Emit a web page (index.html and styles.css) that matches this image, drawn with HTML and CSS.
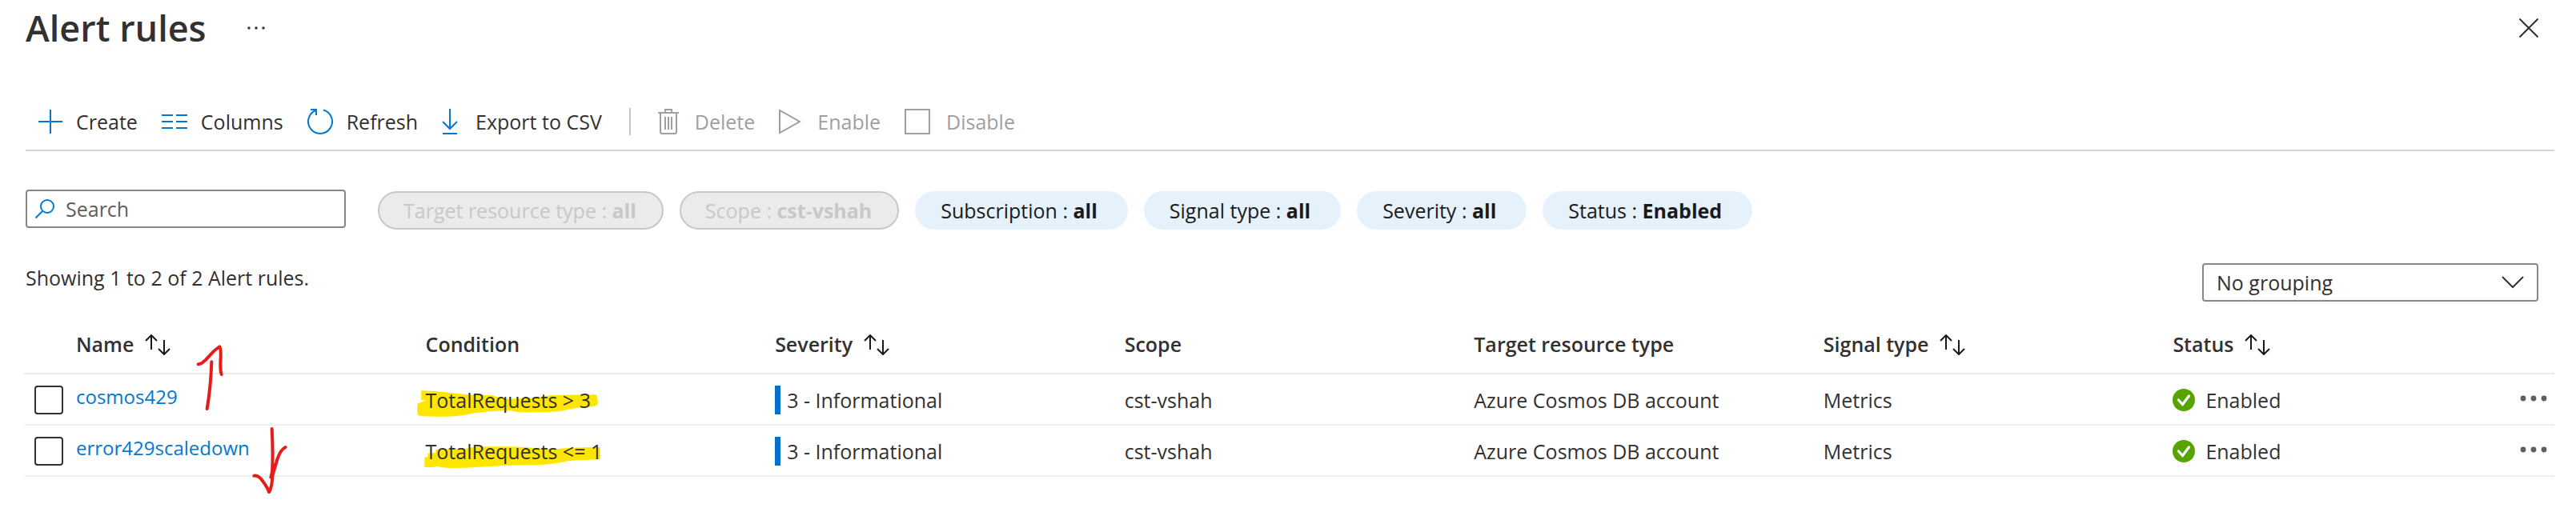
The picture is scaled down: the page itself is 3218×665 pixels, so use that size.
FILE: index.html
```html
<!DOCTYPE html>
<html lang="en">
<head>
<meta charset="utf-8">
<title>Alert rules</title>
<link rel="stylesheet" href="styles.css">
</head>
<body>
<svg class="defs" aria-hidden="true">
  <symbol id="sort" viewBox="0 0 32 26">
    <path d="M8 19V1M1 8l7-7 7 7M24 7v18M17 18l7 7 7-7"/>
  </symbol>
  <symbol id="check" viewBox="0 0 28 28">
    <circle cx="14" cy="14" r="14" fill="#57a300"/>
    <path d="M7.500 14l5 5.500 8-10.500" fill="none" stroke="#fff" stroke-width="3.200" stroke-linecap="round"/>
  </symbol>
  <symbol id="more" viewBox="0 0 34 8">
    <circle cx="4" cy="4" r="3.400"/><circle cx="17" cy="4" r="3.400"/><circle cx="30" cy="4" r="3.400"/>
  </symbol>
</svg>

<header class="titlebar">
  <h1 class="title">Alert rules</h1>
  <button class="icon-button title-more" aria-label="More options">
    <svg width="24" height="6" viewBox="0 0 24 6" fill="#323130"><circle cx="3" cy="3" r="1.700"/><circle cx="12" cy="3" r="1.700"/><circle cx="21" cy="3" r="1.700"/></svg>
  </button>
  <button class="icon-button close" aria-label="Close">
    <svg width="24" height="24" viewBox="0 0 24 24" class="stroke dark"><path d="M.5.5l23 23M23.5.5l-23 23"/></svg>
  </button>
</header>

<nav class="toolbar" aria-label="Commands">
  <button class="command">
    <svg width="30" height="32" viewBox="0 0 30 32" class="stroke blue"><path d="M15 1v30M0 16h30"/></svg>Create</button>
  <button class="command">
    <svg width="32" height="32" viewBox="0 0 32 32" class="stroke blue"><path d="M0 8h14M18 8h14M0 16h14M18 16h14M0 24h14M18 24h14"/></svg>Columns</button>
  <button class="command">
    <svg width="32" height="32" viewBox="0 0 32 32" class="stroke blue"><path d="M20 1.500a15 15 0 1 1-9.500 0.500M4 1h7v7"/></svg>Refresh</button>
  <button class="command export">
    <svg width="20" height="32" viewBox="0 0 20 32" class="stroke blue"><path d="M10 0v25M1 16l9 9 9-9M1 31h18"/></svg>Export to CSV</button>
  <span class="divider"></span>
  <button class="command" disabled>
    <svg width="26" height="32" viewBox="0 0 26 32" class="stroke"><path d="M0 5h26M9 5V1h8v4M3 5v24q0 2 2 2h16q2 0 2-2V5M9 10v16M13 10v16M17 10v16"/></svg>Delete</button>
  <button class="command" disabled>
    <svg width="28" height="32" viewBox="0 0 28 32" class="stroke"><path d="M1 2v28l25-14z"/></svg>Enable</button>
  <button class="command" disabled>
    <svg width="32" height="32" viewBox="0 0 32 32" class="stroke"><path d="M1 1h30v30H1z"/></svg>Disable</button>
</nav>

<section class="filters" aria-label="Filters">
  <label class="search">
    <svg width="24" height="24" viewBox="0 0 24 24" class="stroke blue"><circle cx="15" cy="9" r="8"/><path d="M9 15l-8.500 8.500"/></svg>
    <input type="search" placeholder="Search" aria-label="Search">
  </label>
  <div class="pills">
    <button class="pill" disabled>Target resource type : <b>all</b></button>
    <button class="pill" disabled>Scope : <b>cst-vshah</b></button>
    <button class="pill">Subscription : <b>all</b></button>
    <button class="pill">Signal type : <b>all</b></button>
    <button class="pill">Severity : <b>all</b></button>
    <button class="pill">Status : <b>Enabled</b></button>
  </div>
</section>

<section class="summary">
  <p class="count">Showing 1 to 2 of 2 Alert rules.</p>
  <div class="grouping">
    <select aria-label="Grouping"><option>No grouping</option></select>
    <svg width="28" height="16" viewBox="0 0 28 16" class="stroke dark chevron"><path d="M1 1l13 13L27 1"/></svg>
  </div>
</section>

<main class="rules">
  <table>
    <colgroup><col class="col-check"><col><col><col><col><col><col><col><col class="col-more"></colgroup>
    <thead>
      <tr>
        <td></td>
        <th scope="col">Name<svg class="sort"><use href="#sort"/></svg></th>
        <th scope="col">Condition</th>
        <th scope="col">Severity<svg class="sort"><use href="#sort"/></svg></th>
        <th scope="col">Scope</th>
        <th scope="col">Target resource type</th>
        <th scope="col">Signal type<svg class="sort"><use href="#sort"/></svg></th>
        <th scope="col">Status<svg class="sort"><use href="#sort"/></svg></th>
        <td></td>
      </tr>
    </thead>
    <tbody>
      <tr>
        <td><input class="tick" type="checkbox" aria-label="Select cosmos429"></td>
        <td class="name"><a href="#">cosmos429</a></td>
        <td><span class="marked"><svg class="marker" viewBox="0 0 750 180"><path d="M45 55L100 57L220 70L310 72Q360 90 400 85Q480 85 530 72L700 70Q708 75 707 108Q690 118 640 118Q600 125 560 133Q480 138 410 136L380 130Q300 130 230 142Q190 153 120 152Q50 153 33 147Q29 130 31 104L65 91L46 91z"/></svg>TotalRequests &gt; 3</span></td>
        <td><span class="severity">3 - Informational</span></td>
        <td>cst-vshah</td>
        <td>Azure Cosmos DB account</td>
        <td>Metrics</td>
        <td><span class="status"><svg width="28" height="28"><use href="#check"/></svg>Enabled</span></td>
        <td><button class="icon-button row-more" aria-label="More actions for cosmos429"><svg width="34" height="8"><use href="#more"/></svg></button></td>
      </tr>
      <tr>
        <td><input class="tick" type="checkbox" aria-label="Select error429scaledown"></td>
        <td class="name"><a href="#">error429scaledown</a></td>
        <td><span class="marked"><svg class="marker" viewBox="0 192 750 180"><path d="M100 275L215 272Q240 265 290 265L390 265Q480 270 540 276Q580 267 716 267L716 312L600 318Q540 332 470 334Q350 335 250 342Q160 347 120 343Q105 335 92 342L58 342L58 305L70 303L70 290L100 288z"/></svg>TotalRequests &lt;= 1</span></td>
        <td><span class="severity">3 - Informational</span></td>
        <td>cst-vshah</td>
        <td>Azure Cosmos DB account</td>
        <td>Metrics</td>
        <td><span class="status"><svg width="28" height="28"><use href="#check"/></svg>Enabled</span></td>
        <td><button class="icon-button row-more" aria-label="More actions for error429scaledown"><svg width="34" height="8"><use href="#more"/></svg></button></td>
      </tr>
    </tbody>
  </table>
  <svg class="ink" viewBox="0 0 420 660" aria-hidden="true">
    <path d="M53 136Q65 135 82 118L110 88Q125 75 133 70Q138 75 137 110Q134 155 140 174M103 127Q100 220 86 303"/>
    <path d="M329 378Q334 480 330 540L325 560M262 554Q280 552 295 575Q312 598 318 615Q328 605 332 550Q338 530 350 490Q362 455 380 447"/>
  </svg>
</main>
</body>
</html>
```
FILE: styles.css
```css
* { box-sizing: border-box; }
body {
  min-height: 100vh;
  margin: 0;
  padding: 0 27px 0 32px;
  background: #fff;
  color: #323130;
  font: 25px/36px "Open Sans", "Noto Sans", sans-serif;
}
button, input, select { font: inherit; color: inherit; }
.defs { position: absolute; width: 0; height: 0; }
.stroke { fill: none; stroke: currentColor; stroke-width: 2; flex: none; }
.blue { color: #0078d4; }
.dark { color: #323130; }
.icon-button { display: flex; padding: 0; border: 0; background: none; }

.titlebar { display: flex; align-items: center; height: 70px; }
.title { margin: 0; font-size: 45px; line-height: 68px; font-weight: 600; }
.title-more { margin-left: 50px; }
.close { margin: 0 20px 0 auto; }

.toolbar {
  display: flex;
  align-items: center;
  gap: 30px;
  height: 119px;
  padding: 46px 0 0 16px;
  border-bottom: 2px solid #d6d6d6;
}
.command { display: flex; align-items: center; gap: 17px; padding: 0; border: 0; background: none; }
.command:disabled { gap: 20px; color: #a19f9d; }
.export { gap: 22px; }
.divider { width: 2px; height: 34px; margin: 0 4px; background: #c8c6c4; }

.filters { display: flex; align-items: flex-start; gap: 40px; margin-top: 48px; }
.search {
  display: flex;
  align-items: center;
  gap: 14px;
  width: 400px;
  height: 48px;
  padding: 0 10px;
  border: 2px solid #8a8886;
  border-radius: 4px;
}
.search input { flex: 1; min-width: 0; padding: 0; border: 0; outline: 0; background: none; }
.search input::placeholder { color: #605e5c; opacity: 1; }
.pills { display: flex; gap: 20px; margin-top: 2px; }
.pill {
  height: 48px;
  padding: 0 38px 0 32px;
  border: 0;
  border-radius: 24px;
  background: #e5f1fb;
  color: #1b1a19;
}
.pill:disabled { border: 2px solid #c8c8c8; padding: 0 32px 0 30px; background: #ebebeb; color: #c8c8c8; }

.summary { display: flex; justify-content: space-between; align-items: flex-start; margin-top: 42px; padding-right: 20px; }
.count { margin: 0; }
.grouping { display: grid; align-items: center; width: 420px; }
.grouping select {
  grid-area: 1 / 1;
  appearance: none;
  height: 48px;
  padding: 0 16px;
  border: 2px solid #8a8886;
  border-radius: 4px;
  background: #fff;
}
.chevron { grid-area: 1 / 1; justify-self: end; margin-right: 18px; pointer-events: none; }

.rules { position: relative; margin: 11px 0 0 -2px; }
table { width: 100%; table-layout: fixed; border-collapse: separate; border-spacing: 0; }
.col-check { width: 65px; }
.col-more { width: 40px; }
th, td { padding: 2px 0 0; text-align: left; vertical-align: middle; white-space: nowrap; }
th { padding-top: 5px; font-weight: 600; }
thead tr { height: 80px; }
thead th, thead td { border-bottom: 2px solid #eaeaea; }
tbody tr { height: 64px; }
tbody td { border-bottom: 2px solid #f0f0f0; }
.sort { width: 32px; height: 26px; margin-left: 14px; fill: none; stroke: #1b1a19; stroke-width: 2; vertical-align: -4px; }

.tick {
  display: block;
  appearance: none;
  width: 36px;
  height: 36px;
  margin: 0 0 0 13px;
  border: 2px solid #323130;
  border-radius: 4px;
  background: #fff;
}
tbody .name { padding: 0 0 6px; font-size: 24px; }
.name a { color: #0078d4; text-decoration: none; }
.severity { display: block; padding-left: 8px; border-left: 7px solid #0072c9; }
.status { display: flex; align-items: center; gap: 13px; }
.row-more { justify-content: flex-end; width: 100%; padding: 0 9px 4px 0; fill: #605e5c; }
.row-more svg { flex: none; }

/* Highlighter strokes behind the condition text */
.marked { display: block; position: relative; isolation: isolate; }
.marker { position: absolute; z-index: -1; left: -21px; top: -12px; width: 250px; height: 60px; fill: #ffe600; }

/* Hand-drawn arrows over the name column */
.ink {
  position: absolute;
  left: 200px;
  top: 22px;
  width: 140px;
  height: 220px;
  fill: none;
  stroke: #e81b1b;
  stroke-width: 12;
  stroke-linecap: round;
  stroke-linejoin: round;
  pointer-events: none;
}
```
